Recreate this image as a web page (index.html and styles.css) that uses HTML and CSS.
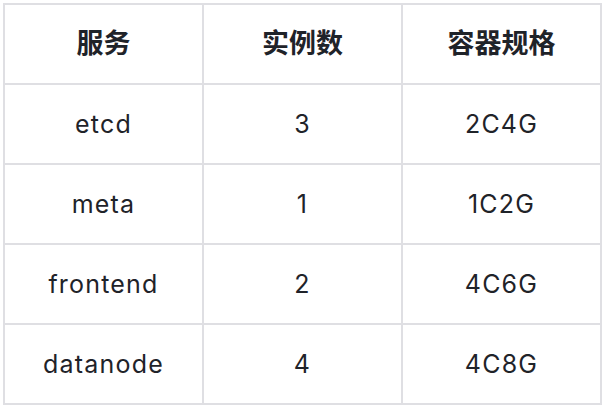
FILE: index.html
```html
<!DOCTYPE html>
<html lang="zh">
<head>
<meta charset="utf-8">
<link rel="stylesheet" href="styles.css">
</head>
<body>
<table class="spec-table">
  <thead>
    <tr><th>服务</th><th>实例数</th><th>容器规格</th></tr>
  </thead>
  <tbody>
    <tr><td>etcd</td><td>3</td><td>2C4G</td></tr>
    <tr><td>meta</td><td>1</td><td>1C2G</td></tr>
    <tr><td>frontend</td><td>2</td><td>4C6G</td></tr>
    <tr><td>datanode</td><td>4</td><td>4C8G</td></tr>
  </tbody>
</table>
</body>
</html>
```
FILE: styles.css
```css
html, body {
  margin: 0;
  padding: 0;
  background: #ffffff;
}
body {
  padding: 3px 0 0 3px;
}
.spec-table {
  border-collapse: collapse;
  table-layout: fixed;
  width: 599px;
  font-family: Inter, "Noto Sans CJK SC", sans-serif;
  color: #1f2329;
}
.spec-table th,
.spec-table td {
  border: 2px solid #dfdfe3;
  height: 78px;
  padding: 0;
  text-align: center;
  vertical-align: middle;
  line-height: 30px;
}
.spec-table th {
  font-weight: 600;
  font-size: 27px;
}
.spec-table td {
  font-weight: 400;
  font-size: 25px;
  letter-spacing: 1.2px;
}
```
